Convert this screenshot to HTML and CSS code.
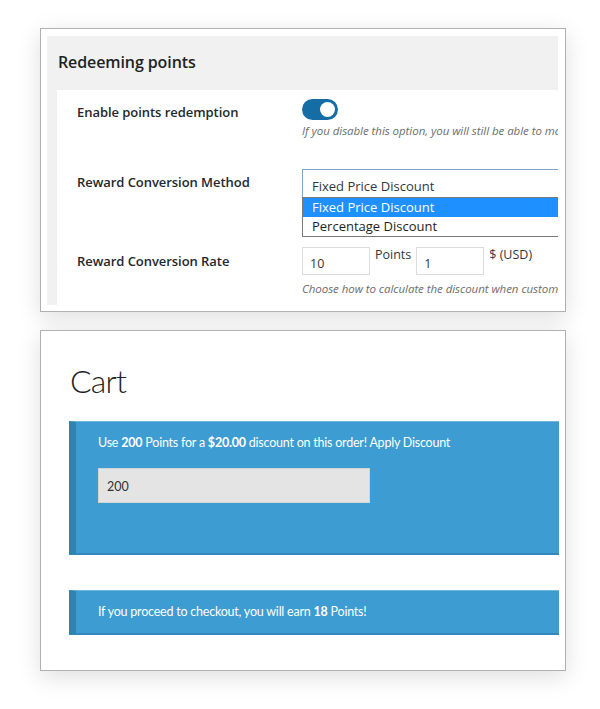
FILE: index.html
```html
<!DOCTYPE html>
<html>
<head>
<meta charset="utf-8">
<link rel="stylesheet" href="styles.css">
</head>
<body>
<div class="page">
  <section class="panel settings-panel">
    <div class="settings">
      <h2 class="settings-title">Redeeming points</h2>
      <div class="settings-body">
        <div class="row row-toggle">
          <div class="label">Enable points redemption</div>
          <div class="field">
            <span class="toggle"><span class="knob"></span></span>
            <p class="desc">If you disable this option, you will still be able to manage points for customers</p>
          </div>
        </div>
        <div class="row row-select">
          <div class="label">Reward Conversion Method</div>
          <div class="field">
            <div class="select">Fixed Price Discount</div>
            <ul class="options">
              <li class="option selected">Fixed Price Discount</li>
              <li class="option">Percentage Discount</li>
            </ul>
          </div>
        </div>
        <div class="row row-rate">
          <div class="label">Reward Conversion Rate</div>
          <div class="field">
            <div class="rate">
              <span class="input">10</span>
              <span class="unit">Points</span>
              <span class="input">1</span>
              <span class="unit">$ (USD)</span>
            </div>
            <p class="desc">Choose how to calculate the discount when customers redeem points</p>
          </div>
        </div>
      </div>
    </div>
  </section>

  <section class="panel cart-panel">
    <h1 class="cart-title">Cart</h1>
    <div class="notice notice-tall">
      <p>Use <b>200</b> Points for a <b>$20.00</b> discount on this order! Apply Discount</p>
      <div class="points-input">200</div>
    </div>
    <div class="notice notice-short">
      <p>If you proceed to checkout, you will earn <b>18</b> Points!</p>
    </div>
  </section>
</div>
</body>
</html>
```

FILE: styles.css
```css
* { box-sizing: border-box; }
html, body { margin: 0; padding: 0; background: #ffffff; }
body { width: 600px; height: 709px; overflow: hidden; }

.page {
  padding: 28px 0 0 40px;
  display: flex;
  flex-direction: column;
  gap: 18px;
}

.panel {
  width: 526px;
  border: 1px solid #b1b1b1;
  background: #ffffff;
  box-shadow: 0 6px 22px rgba(0, 0, 0, 0.13);
  overflow: hidden;
}

/* ---------- settings panel ---------- */
.settings-panel {
  height: 284px;
  padding: 7px 7px 6px 6px;
}
.settings {
  background: #f1f1f1;
  height: 100%;
  overflow: hidden;
  display: flex;
  flex-direction: column;
}
.settings-title {
  margin: 0;
  height: 54px;
  padding: 15px 0 0 11px;
  font-family: "Open Sans", "Noto Sans", sans-serif;
  font-weight: 600;
  font-size: 16px;
  color: #1d2327;
  letter-spacing: -0.1px;
}
.settings-body {
  margin-left: 10px;
  flex: 1;
  background: #ffffff;
  padding: 9px 0 0 20px;
  font-family: "Open Sans", "Noto Sans", sans-serif;
  overflow: hidden;
}
.row {
  display: flex;
}
.label {
  width: 225px;
  flex: none;
  font-size: 13px;
  font-weight: 600;
  color: #23282d;
  letter-spacing: -0.05px;
}
.field {
  position: relative;
  flex: none;
  width: 300px;
}
.row-toggle { height: 70px; }
.row-toggle .label { padding-top: 4px; }
.toggle {
  display: block;
  width: 36px;
  height: 21px;
  border-radius: 11px;
  background: #146ea5;
  position: relative;
}
.knob {
  position: absolute;
  right: 3px;
  top: 3px;
  width: 15px;
  height: 15px;
  border-radius: 50%;
  background: #ffffff;
}
.desc {
  margin: 0;
  font-size: 11.5px;
  font-style: italic;
  color: #6d6d6d;
  white-space: nowrap;
  letter-spacing: -0.05px;
}
.row-toggle .desc { margin-top: 3px; }

.row-select { height: 78px; }
.row-select .label { padding-top: 4px; }
.select {
  height: 29px;
  width: 300px;
  border: 1px solid #7fa6c9;
  padding: 7px 0 0 9px;
  font-size: 13px;
  color: #32373c;
  background: #fff;
}
.options {
  position: absolute;
  left: 0;
  top: 28px;
  width: 300px;
  margin: 0;
  padding: 0;
  list-style: none;
  border: 1px solid #7a7a7a;
  background: #fff;
  z-index: 2;
}
.option {
  height: 19px;
  padding: 1px 0 0 9px;
  font-size: 13px;
  color: #1e1e1e;
  line-height: 17px;
}
.option.selected {
  background: #1e90ff;
  color: #ffffff;
}

.row-rate .label { padding-top: 5px; }
.rate {
  display: flex;
  align-items: flex-start;
  gap: 5px;
  height: 28px;
}
.input {
  display: block;
  width: 68px;
  height: 28px;
  border: 1px solid #dcdcdc;
  padding: 7px 0 0 7px;
  font-size: 12.5px;
  color: #32373c;
}
.unit {
  font-size: 12.5px;
  color: #32373c;
  margin-top: 0;
  line-height: 16px;
}
.row-rate .desc { margin-top: 6px; }

/* ---------- cart panel ---------- */
.cart-panel {
  height: 341px;
  padding: 26px 6px 0 28px;
  font-family: "Lato", "Liberation Sans", sans-serif;
}
.cart-title {
  margin: 0 0 0 1px;
  font-family: "Lato", sans-serif;
  font-weight: 300;
  font-size: 32px;
  line-height: 48px;
  color: #222;
  letter-spacing: -0.8px;
}
.notice {
  background: #3d9cd1;
  border-left: 7px solid #2f83b3;
  border-top: 1px solid #6cb6e0;
  border-bottom: 2px solid #3288bd;
  color: #ffffff;
  padding: 0 0 0 22px;
}
.notice p {
  margin: 0;
  font-size: 12.5px;
  letter-spacing: -0.22px;
}
.notice b { font-weight: 700; }
.notice-tall {
  margin-top: 16px;
  height: 134px;
  padding-top: 13px;
}
.points-input {
  margin-top: 18px;
  width: 272px;
  height: 35px;
  background: #e4e4e4;
  border: 1px solid #d4d4d4;
  color: #333;
  font-size: 12.5px;
  padding: 10px 0 0 8px;
}
.notice-short {
  margin-top: 35px;
  height: 45px;
  padding-top: 13px;
}
```
